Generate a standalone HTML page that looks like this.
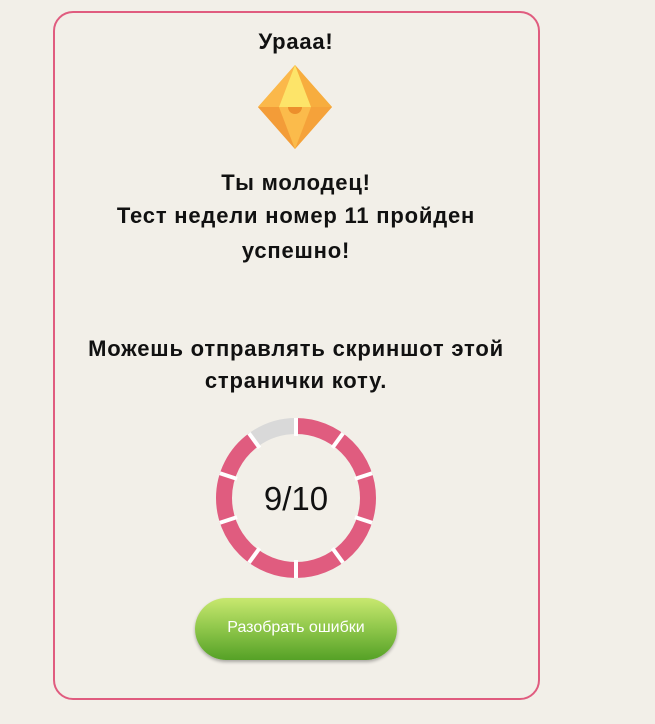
<!DOCTYPE html>
<html><head><meta charset="utf-8"><style>
html,body{margin:0;padding:0;background:#f2efe8;width:655px;height:724px;overflow:hidden;font-family:"Liberation Sans","DejaVu Sans",sans-serif;}
.card{position:absolute;left:53px;top:11px;width:483px;height:685px;border:2px solid #e05c7f;border-radius:20px;}
.t{position:absolute;left:0;width:592px;text-align:center;font-weight:bold;font-size:22px;letter-spacing:0.8px;color:#111;white-space:nowrap;}
.btn{position:absolute;left:195px;top:598px;width:202px;height:62px;border-radius:31px;background:linear-gradient(#c8e86f,#8ec64a 50%,#55a126);box-shadow:0 2px 3px rgba(0,0,0,.3);color:#fff;font-size:16px;text-align:center;line-height:60px;}
</style></head><body>
<div class="card"></div>
<div class="t" style="top:29px">Урааа!</div>
<svg style="position:absolute;left:257px;top:64px" width="76" height="86" viewBox="0 0 76 86">
<polygon points="38,1 75,43 38,85 1,43" fill="#f9b23f"/>
<polygon points="38,1 1,43 22,43" fill="#fbb84a"/>
<polygon points="38,1 54,43 75,43" fill="#f7ad3e"/>
<polygon points="38,1 22,43 54,43" fill="#fde469"/>
<polygon points="1,43 22,43 38,85" fill="#f39c38"/>
<polygon points="75,43 54,43 38,85" fill="#f5a23a"/>
<polygon points="22,43 54,43 38,85" fill="#fbbb4b"/>
<path d="M31,43 A7,7 0 0 0 45,43 Z" fill="#ec8f2c"/>
</svg>
<div class="t" style="top:170px">Ты молодец!</div>
<div class="t" style="top:203px">Тест недели номер 11 пройден</div>
<div class="t" style="top:238px">успешно!</div>
<div class="t" style="top:336px">Можешь отправлять скриншот этой</div>
<div class="t" style="top:368px">странички коту.</div>
<svg style="position:absolute;left:216px;top:418px" width="160" height="160" viewBox="0 0 160 160">
<g fill="none" stroke-width="16" transform="rotate(-90 80 80)">
<circle cx="80" cy="80" r="72" stroke="#e05c7f" stroke-dasharray="407.2 500"/>
<circle cx="80" cy="80" r="72" stroke="#d9d9d9" stroke-dasharray="45.24 500" transform="rotate(324 80 80)"/>
</g>
<g stroke="#fff" stroke-width="4">
<line x1="80" y1="0" x2="80" y2="18" transform="rotate(0 80 80)"/>
<line x1="80" y1="0" x2="80" y2="18" transform="rotate(36 80 80)"/>
<line x1="80" y1="0" x2="80" y2="18" transform="rotate(72 80 80)"/>
<line x1="80" y1="0" x2="80" y2="18" transform="rotate(108 80 80)"/>
<line x1="80" y1="0" x2="80" y2="18" transform="rotate(144 80 80)"/>
<line x1="80" y1="0" x2="80" y2="18" transform="rotate(180 80 80)"/>
<line x1="80" y1="0" x2="80" y2="18" transform="rotate(216 80 80)"/>
<line x1="80" y1="0" x2="80" y2="18" transform="rotate(252 80 80)"/>
<line x1="80" y1="0" x2="80" y2="18" transform="rotate(288 80 80)"/>
<line x1="80" y1="0" x2="80" y2="18" transform="rotate(324 80 80)"/>
</g>
<text x="80" y="92" text-anchor="middle" font-family="Liberation Sans, sans-serif" font-size="33" fill="#111">9/10</text>
</svg>
<div class="btn">Разобрать ошибки</div>
</body></html>
